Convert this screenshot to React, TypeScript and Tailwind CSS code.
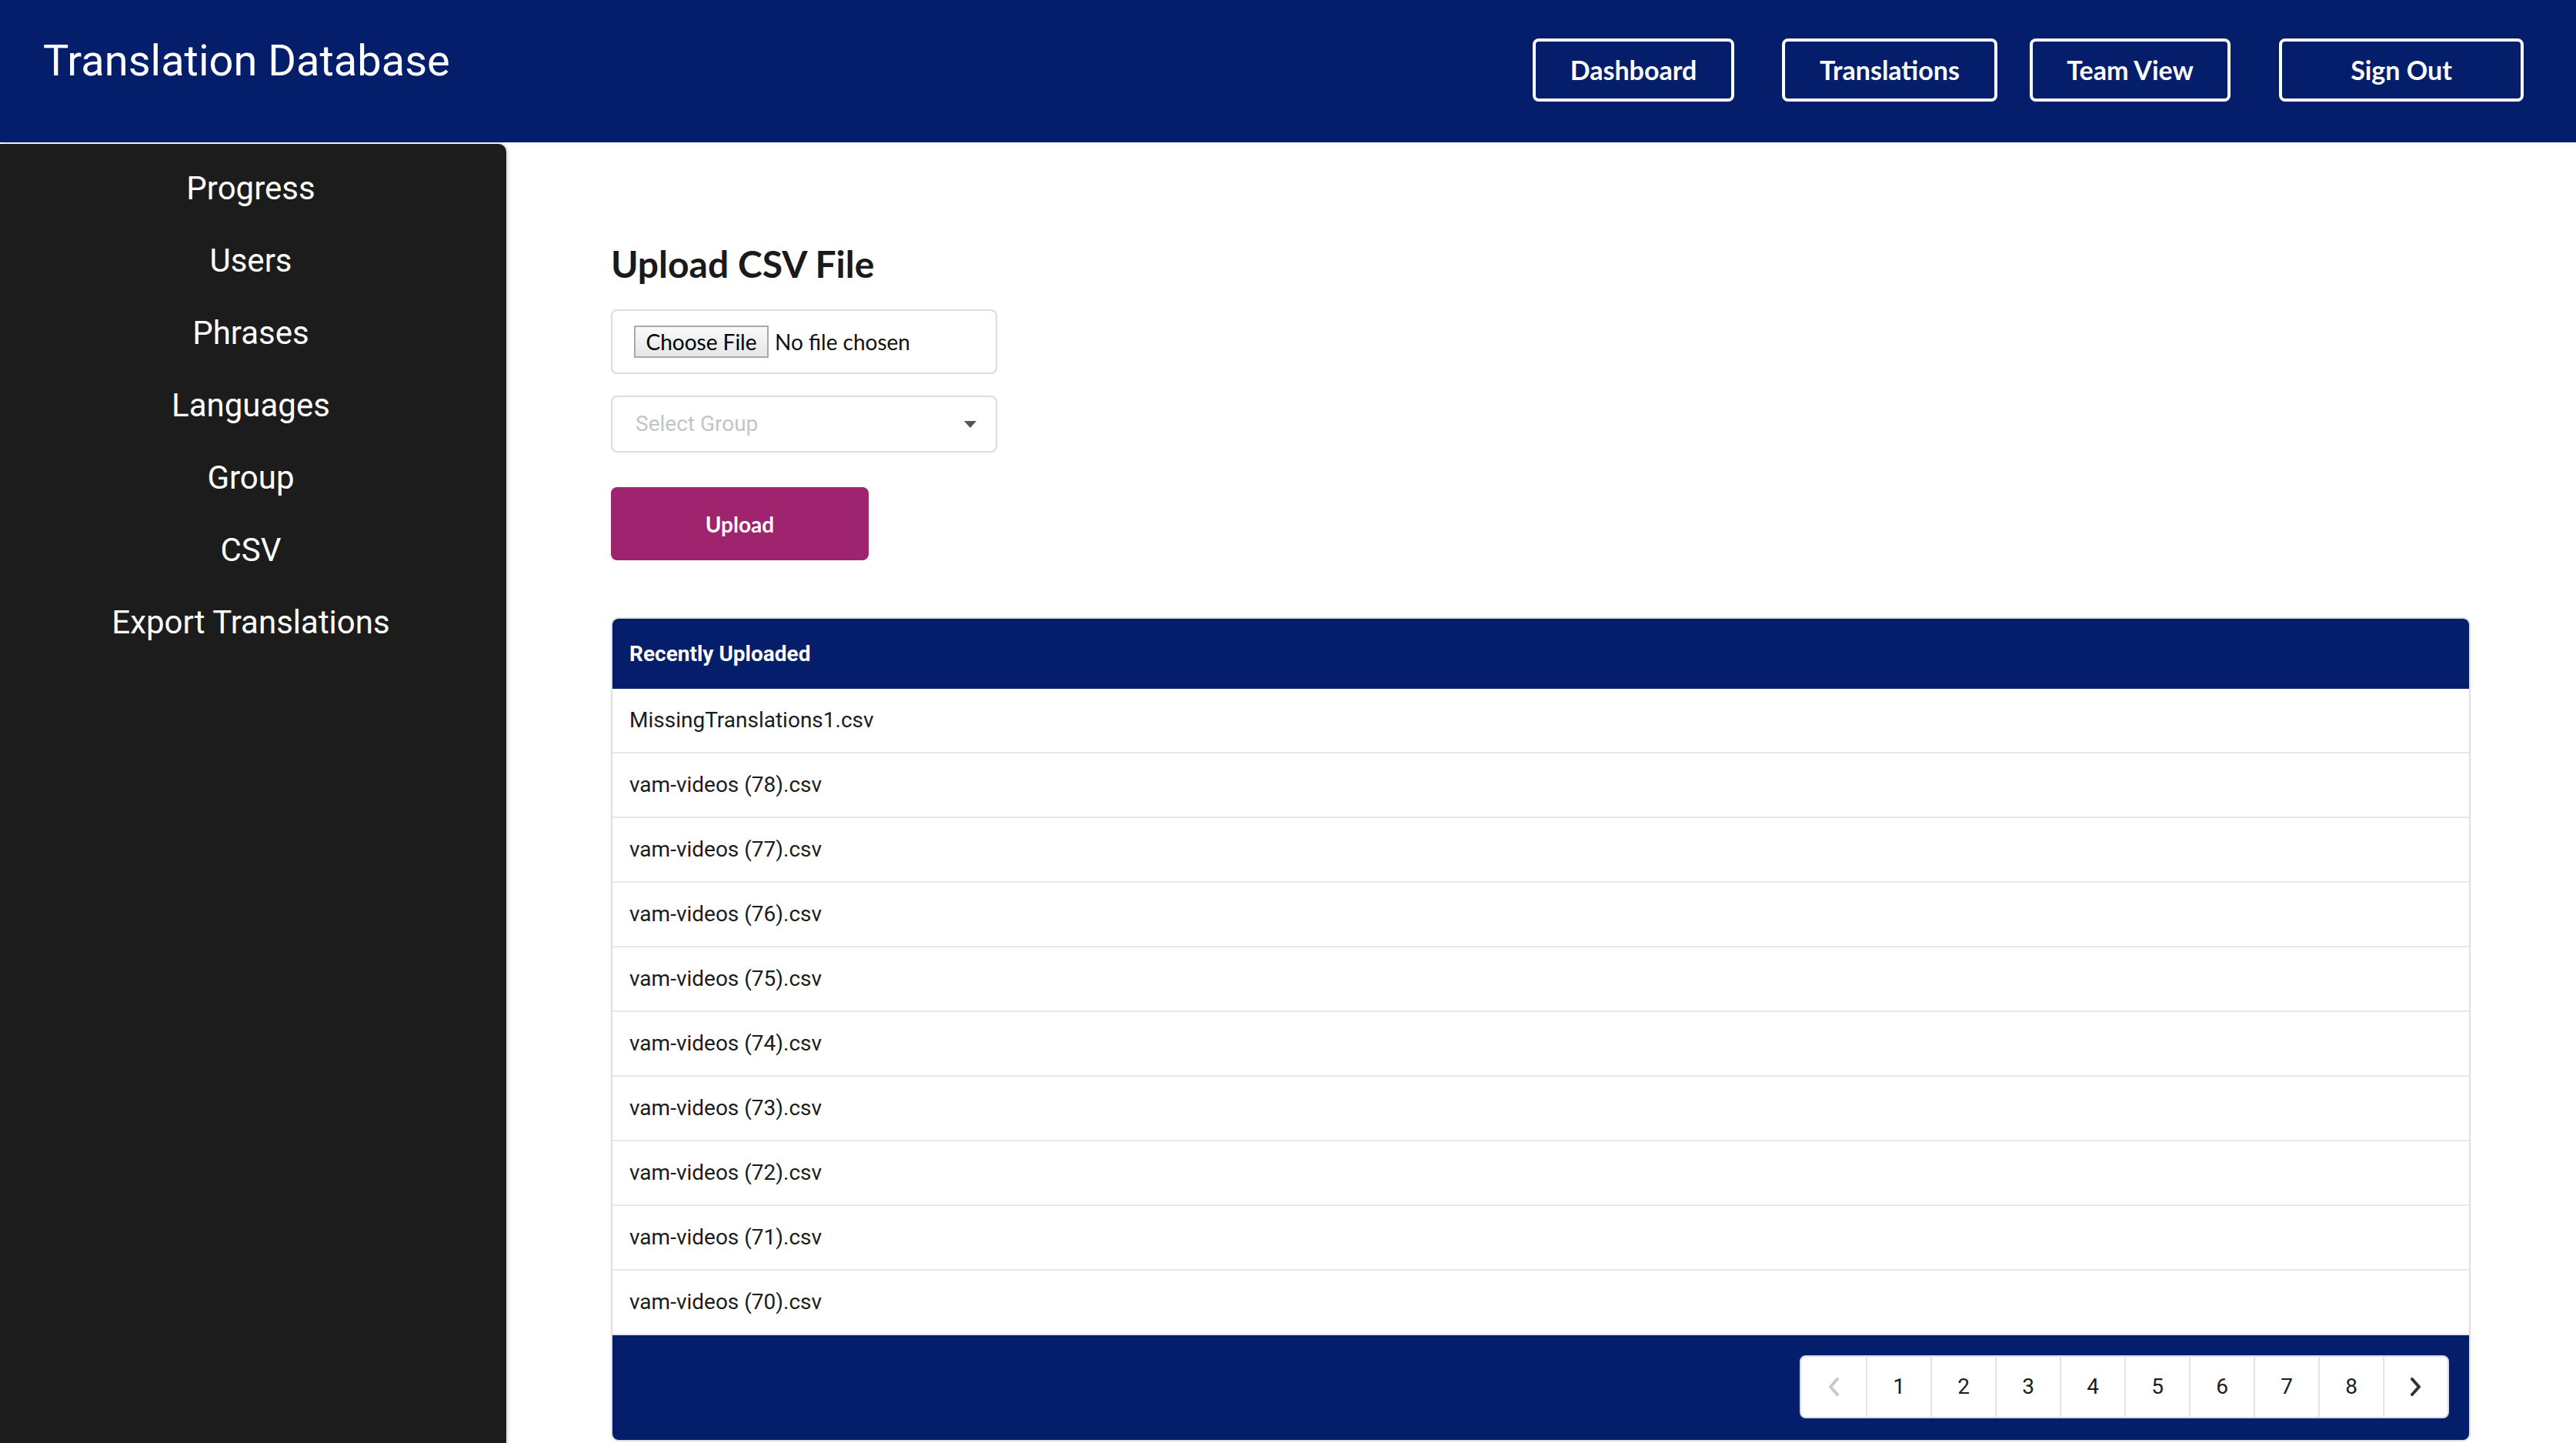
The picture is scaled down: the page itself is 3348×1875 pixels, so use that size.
import React from "react";

const roboto = "font-['Roboto',sans-serif]";
const lato = "font-['Lato',sans-serif]";

function NavButton({ label, width, ml }: { label: string; width: string; ml: string }) {
  return (
    <button
      className={`${width} ${ml} h-[82px] border-4 border-white rounded-[8px] text-white font-bold text-[34px] leading-none flex items-center justify-center ${lato}`}
    >
      {label}
    </button>
  );
}

function Chevron({ dir, color }: { dir: "left" | "right"; color: string }) {
  return (
    <svg width="16" height="24" viewBox="0 0 16 24" fill="none">
      <polyline
        points={dir === "left" ? "13,2 4,12 13,22" : "3,2 12,12 3,22"}
        stroke={color}
        strokeWidth="4"
        strokeLinecap="round"
        strokeLinejoin="round"
      />
    </svg>
  );
}

export default function App() {
  const files = [
    "MissingTranslations1.csv",
    "vam-videos (78).csv",
    "vam-videos (77).csv",
    "vam-videos (76).csv",
    "vam-videos (75).csv",
    "vam-videos (74).csv",
    "vam-videos (73).csv",
    "vam-videos (72).csv",
    "vam-videos (71).csv",
    "vam-videos (70).csv",
  ];
  const menu = ["Progress", "Users", "Phrases", "Languages", "Group", "CSV", "Export Translations"];
  const pages = ["1", "2", "3", "4", "5", "6", "7", "8"];

  return (
    <div className="w-[3348px] h-[1875px] overflow-hidden bg-white flex flex-col">
      <header className="h-[185px] shrink-0 bg-[#041e6b] flex items-start">
        <h1 className={`ml-[56px] mt-[51px] text-[56px] leading-none text-white font-normal ${roboto}`}>
          Translation Database
        </h1>
        <nav className="ml-auto mr-[68px] mt-[50px] flex">
          <NavButton label="Dashboard" width="w-[262px]" ml="ml-0" />
          <NavButton label="Translations" width="w-[280px]" ml="ml-[62px]" />
          <NavButton label="Team View" width="w-[261px]" ml="ml-[42px]" />
          <NavButton label="Sign Out" width="w-[318px]" ml="ml-[63px]" />
        </nav>
      </header>

      <div className="flex flex-1 min-h-0">
        <aside className="mt-[2px] w-[658px] shrink-0 bg-[#1c1c1c] rounded-tr-[10px] shadow-[2px_0_4px_rgba(0,0,0,0.18)] pt-[11px] pr-[6px] flex flex-col">
          {menu.map((m) => (
            <div
              key={m}
              className={`h-[94px] flex items-center justify-center text-[42px] text-white leading-none ${roboto}`}
            >
              {m}
            </div>
          ))}
        </aside>

        <main className="flex-1 min-w-0 pl-[136px] pr-[137px] pt-[129px] flex flex-col">
          <h2 className={`text-[48px] leading-[58px] font-bold text-[#1a1a1a] ${lato}`}>Upload CSV File</h2>

          <div className="mt-[30px] h-[84px] w-[502px] border-2 border-[#dcdcdc] rounded-[8px] flex items-center pl-[28px]">
            <div
              className={`h-[42px] w-[175px] border-2 border-[#a9a9a9] bg-gradient-to-b from-[#f9f9f9] to-[#e6e6e6] text-[28px] leading-none text-black flex items-center justify-center ${lato}`}
            >
              Choose File
            </div>
            <span className={`ml-[8px] text-[28px] leading-none text-[#111] ${lato}`}>No file chosen</span>
          </div>

          <div className="mt-[28px] h-[74px] w-[502px] border-2 border-[#dcdcdc] rounded-[8px] flex items-center justify-between pl-[30px] pr-[25px]">
            <span className={`text-[28px] leading-none text-[#c4c4c4] ${roboto}`}>Select Group</span>
            <svg width="16" height="9" viewBox="0 0 16 9">
              <polygon points="0,0 16,0 8,9" fill="#555555" />
            </svg>
          </div>

          <button
            className={`mt-[45px] h-[95px] w-[335px] bg-[#9e2470] rounded-[8px] text-white font-bold text-[28px] leading-none flex items-center justify-center ${lato}`}
          >
            Upload
          </button>

          <div className="mt-[74px] w-full border-2 border-[#dedede] rounded-[10px] overflow-hidden flex flex-col">
            <div className="h-[91px] bg-[#041e6b] flex items-center pl-[22px]">
              <span className={`text-white font-bold text-[28px] leading-none ${roboto}`}>Recently Uploaded</span>
            </div>
            {files.map((f) => (
              <div key={f} className="h-[84px] border-b-2 border-[#e8e8e8] flex items-center pl-[22px]">
                <span className={`text-[28px] leading-none text-[#1c1c1c] ${roboto}`}>{f}</span>
              </div>
            ))}
            <div className="h-[136px] bg-[#041e6b] flex items-start justify-end pt-[26px] pr-[26px]">
              <div className="h-[82px] bg-white rounded-[8px] flex border-2 border-[#d5d9e8]">
                <div className="w-[84px] flex items-center justify-center">
                  <Chevron dir="left" color="#c8c8c8" />
                </div>
                {pages.map((p) => (
                  <div
                    key={p}
                    className={`w-[84px] border-l-2 border-[#e4e4e4] flex items-center justify-center text-[28px] leading-none text-[#1c1c1c] ${roboto}`}
                  >
                    {p}
                  </div>
                ))}
                <div className="w-[84px] border-l-2 border-[#e4e4e4] flex items-center justify-center">
                  <Chevron dir="right" color="#333333" />
                </div>
              </div>
            </div>
          </div>
        </main>
      </div>
    </div>
  );
}
